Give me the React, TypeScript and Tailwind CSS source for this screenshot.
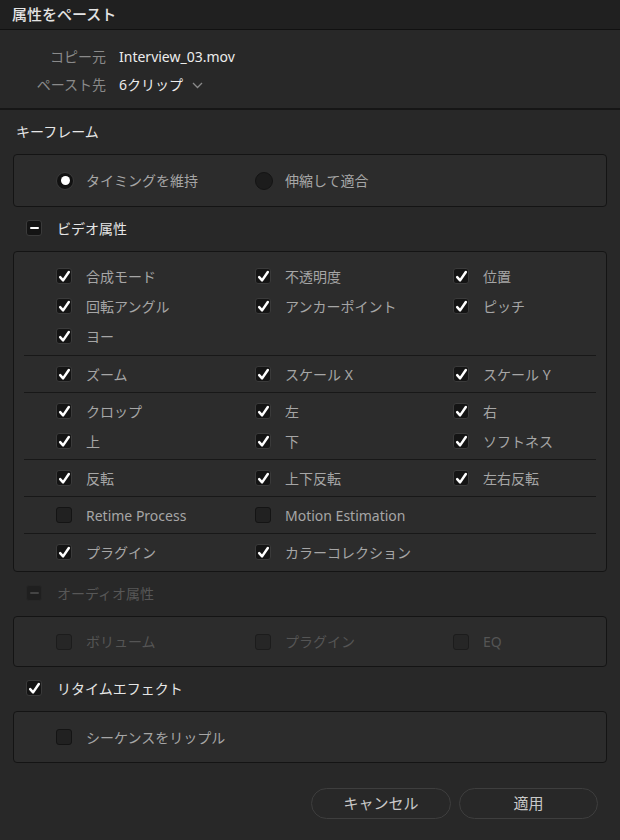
import React from "react";

const font = { fontFamily: '"Noto Sans", "Noto Sans CJK JP", sans-serif' };

type BoxState = "checked" | "unchecked" | "mixed";

const Check = ({ state, dim }: { state: BoxState; dim?: boolean }) => {
  const base =
    state === "unchecked"
      ? dim
        ? "bg-[#262626] border-[#1c1c1c]"
        : "bg-[#212121] border-[#141414]"
      : dim
        ? "bg-[#1f1f1f] border-[#262626]"
        : "bg-[#141414] border-[#3a3a3a]";
  return (
    <span
      className={`flex h-[16px] w-[16px] shrink-0 items-center justify-center rounded-[3px] border ${base}`}
    >
      {state === "checked" && (
        <svg width="13" height="13" viewBox="0 0 12 12">
          <path
            d="M2 6.6 L4.7 9.6 L10 1.8"
            fill="none"
            stroke="#ffffff"
            strokeWidth="2.3"
            strokeLinecap="round"
            strokeLinejoin="round"
          />
        </svg>
      )}
      {state === "mixed" && (
        <span className={`h-[2px] w-[9px] rounded-sm ${dim ? "bg-[#444]" : "bg-white"}`} />
      )}
    </span>
  );
};

const Item = ({ label, state = "checked", dim }: { label: string; state?: BoxState; dim?: boolean }) => (
  <div className="flex h-[30px] items-center gap-[14px]">
    <Check state={state} dim={dim} />
    <span className={`text-[14px] ${dim ? "text-[#555555]" : "text-[#a6a6a6]"}`}>{label}</span>
  </div>
);

const Group = ({ rows, first, last }: { rows: (string | [string, BoxState])[][]; first?: boolean; last?: boolean }) => (
  <div
    className={`grid grid-cols-[199px_198px_1fr] pl-[42px] ${
      first ? "pt-[9px] pb-[4px]" : last ? "pt-[3px] pb-[4px]" : "py-[3px]"
    }`}
  >
    {rows.flat().map((r, i) =>
      typeof r === "string" ? <Item key={i} label={r} /> : <Item key={i} label={r[0]} state={r[1]} />
    )}
  </div>
);

const Divider = () => <div className="mx-[10px] h-px bg-[#181818]" />;

const SectionHeader = ({ label, state, dim }: { label: string; state?: BoxState; dim?: boolean }) => (
  <div className="mt-[11px] mb-[13px] flex h-[20px] items-center">
    <div className="flex items-center gap-[15px] pl-[26px]">
      <Check state={state ?? "checked"} dim={dim} />
      <span className={`text-[14px] ${dim ? "text-[#575757]" : "text-[#e6e6e6]"}`}>{label}</span>
    </div>
  </div>
);

const Radio = ({ on }: { on?: boolean }) => (
  <span
    className={`flex h-[18px] w-[18px] items-center justify-center rounded-full ${
      on ? "bg-[#111111] border border-[#3a3a3a]" : "bg-[#1c1c1c] border border-[#141414]"
    }`}
  >
    {on && <span className="h-[9px] w-[9px] rounded-full bg-white" />}
  </span>
);

export default function App() {
  return (
    <div style={font} className="min-h-[840px] w-[620px] bg-[#282828] select-none">
      {/* title */}
      <div className="flex h-[30px] items-center border-b border-[#111111] bg-[#202020] pl-[12px]">
        <span className="text-[15px] font-medium text-[#e4e4e4]">属性をペースト</span>
      </div>

      {/* source / destination */}
      <div className="h-[80px] border-b-2 border-[#161616] pt-[12px]">
        <div className="flex h-[28px] items-center">
          <span className="w-[106px] text-right text-[14px] text-[#8a8a8a]">コピー元</span>
          <span className="ml-[13px] text-[14px] text-[#ececec]">Interview_03.mov</span>
        </div>
        <div className="flex h-[28px] items-center">
          <span className="w-[106px] text-right text-[14px] text-[#8a8a8a]">ペースト先</span>
          <span className="ml-[13px] text-[14px] text-[#ececec]">6クリップ</span>
          <svg className="ml-[9px] mt-[2px]" width="11" height="7" viewBox="0 0 11 7">
            <path d="M1 1 L5.5 5.5 L10 1" fill="none" stroke="#8a8a8a" strokeWidth="1.3" />
          </svg>
        </div>
      </div>

      <div className="mt-[11px] mb-[13px] flex h-[20px] items-center">
        <span className="pl-[16px] text-[14px] text-[#e6e6e6]">キーフレーム</span>
      </div>

      <div className="mx-[13px] flex h-[53px] items-center rounded-[4px] border border-[#141414] bg-[#2c2c2c] pl-[42px]">
        <div className="flex w-[199px] items-center gap-[12px]">
          <Radio on />
          <span className="text-[14px] text-[#a6a6a6]">タイミングを維持</span>
        </div>
        <div className="flex items-center gap-[12px]">
          <Radio />
          <span className="text-[14px] text-[#a6a6a6]">伸縮して適合</span>
        </div>
      </div>

      <SectionHeader label="ビデオ属性" state="mixed" />

      <div className="mx-[13px] rounded-[4px] border border-[#141414] bg-[#2c2c2c]">
        <Group
          first
          rows={[
            ["合成モード", "不透明度", "位置"],
            ["回転アングル", "アンカーポイント", "ピッチ"],
            ["ヨー"],
          ]}
        />
        <Divider />
        <Group rows={[["ズーム", "スケール X", "スケール Y"]]} />
        <Divider />
        <Group
          rows={[
            ["クロップ", "左", "右"],
            ["上", "下", "ソフトネス"],
          ]}
        />
        <Divider />
        <Group rows={[["反転", "上下反転", "左右反転"]]} />
        <Divider />
        <Group rows={[[["Retime Process", "unchecked"], ["Motion Estimation", "unchecked"]]]} />
        <Divider />
        <Group last rows={[["プラグイン", "カラーコレクション"]]} />
      </div>

      <SectionHeader label="オーディオ属性" state="mixed" dim />

      <div className="mx-[13px] grid h-[51px] grid-cols-[199px_198px_1fr] items-center rounded-[4px] border border-[#141414] bg-[#2c2c2c] pl-[42px]">
        <Item label="ボリューム" state="unchecked" dim />
        <Item label="プラグイン" state="unchecked" dim />
        <Item label="EQ" state="unchecked" dim />
      </div>

      <SectionHeader label="リタイムエフェクト" state="checked" />

      <div className="mx-[13px] flex h-[52px] items-center rounded-[4px] border border-[#141414] bg-[#2c2c2c] pl-[42px]">
        <Item label="シーケンスをリップル" state="unchecked" />
      </div>

      <div className="mt-[25px] flex justify-end gap-[8px] pr-[22px]">
        <button className="h-[31px] w-[140px] rounded-full border border-[#3e3e3e] bg-[#282828] text-[15px] text-[#c9c9c9]">
          キャンセル
        </button>
        <button className="h-[31px] w-[139px] rounded-full border border-[#3e3e3e] bg-[#282828] text-[15px] text-[#c9c9c9]">
          適用
        </button>
      </div>
    </div>
  );
}
